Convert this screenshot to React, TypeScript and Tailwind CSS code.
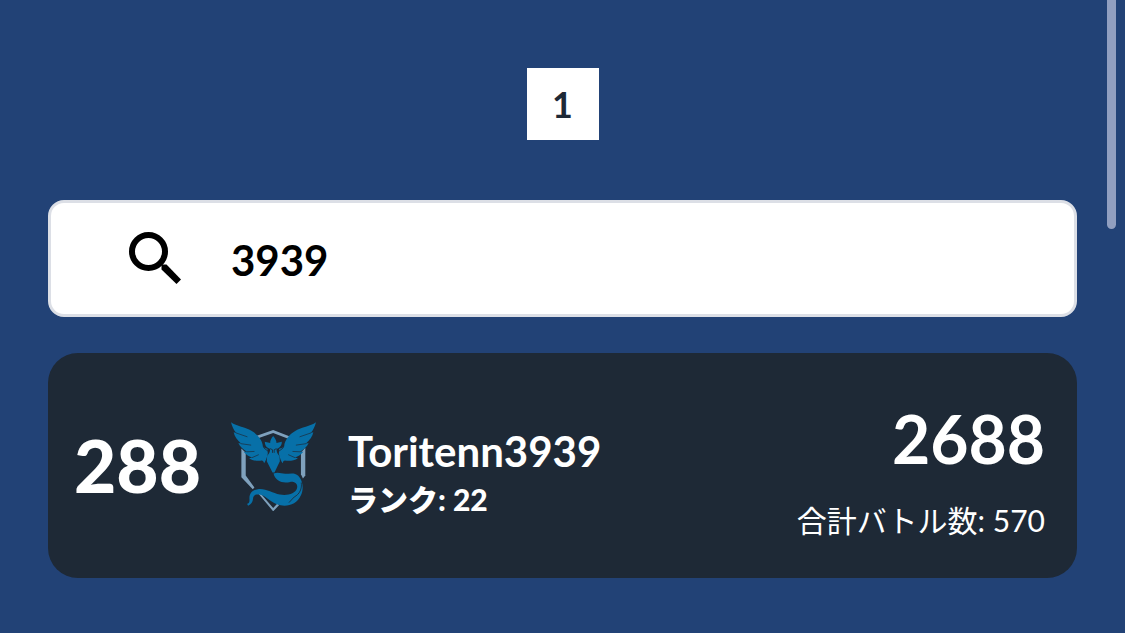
import { useState } from "react";

type Player = {
  position: number,
  name: string,
  rank: number,
  score: number,
  battles: number,
};

const players: Player[] = [
  { position: 288, name: "Toritenn3939", rank: 22, score: 2688, battles: 570 },
];

const SearchIcon = () => (
  <svg viewBox="0 0 52 52" className="mb-[2px] size-[52px] shrink-0" fill="none" stroke="black" strokeWidth="6" aria-hidden="true">
    <circle cx="19.5" cy="19.5" r="16.5" />
    <path d="M32.5 37.5V32.5H37.5L52 47.5L47.5 52Z" fill="black" strokeWidth="0" />
  </svg>
);

const TeamEmblem = () => (
  <svg viewBox="48 36 254 268" className="mt-[2px] w-[85px] shrink-0" role="img" aria-label="Team Mystic">
    {/* shield */}
    <g fill="#7fa1bd">
      <path d="M123 78L174 60L226 80L221 87L174 69L127 85Z" />
      <path d="M79 115L92 128V196L118 232L113 237L79 201Z" />
      <path d="M270 113L257 127V192L263 205L270 196Z" />
      <path d="M129 249L136 249L174 293L186 280L192 284L174 303Z" />
    </g>
    <g fill="#0770a8">
      {/* wings */}
      <path d="M48 37C65 49 92 52 109 62C128 73 141 90 143 106C145 112 150 114 157 116L158 131C155 144 151 154 147 159C145 153 143 151 140 151C127 154 113 151 102 144L112 142C103 140 92 134 86 125L96 125C85 119 75 110 70 99L79 101C67 91 58 79 56 67L64 69C56 60 51 50 48 37Z" />
      <path d="M302 37C285 49 258 52 241 62C222 73 209 90 207 106C205 112 200 114 192 116L191 131C194 144 198 154 202 159C204 153 206 151 209 151C223 154 237 151 248 144L238 142C247 140 258 134 264 125L254 125C265 119 275 110 280 99L271 101C283 91 292 79 294 67L286 69C294 60 299 50 302 37Z" />
      {/* head and body */}
      <path d="M174 78C180 85 184 91 184 99L200 95C200 105 196 111 188 115L184 117C184 126 187 132 193 138L194 153L178 187L172 187L155 153L156 137C162 132 165 126 165 117L159 114C152 110 149 104 149 95L165 99C165 91 168 85 174 78Z" />
      {/* tail */}
      <path d="M175 190C189 185 198 190 210 191C224 191 238 186 249 197C263 211 266 237 257 255C244 285 211 292 185 282C163 273 149 255 133 253C120 251 114 256 114 265C113 275 108 284 99 286L96 280C102 280 104 275 103 264C103 248 113 239 128 237C153 234 171 249 194 253C218 257 240 250 245 235C249 222 240 214 225 215C203 220 181 214 175 190Z" />
    </g>
    {/* feather and ribbon cuts */}
    <g fill="none" stroke="#1e2936" strokeLinecap="round">
      <path strokeWidth="2" d="M64 69L96 80M79 101L107 105M96 125L117 124M112 142L130 134" />
      <path strokeWidth="2" d="M286 69L254 80M271 101L243 105M254 125L233 124M238 142L220 134" />
      <path strokeWidth="2.5" d="M166 116L172 119V127M183 116L177 119V127" />
      <path strokeWidth="2.5" d="M144 108C145 116 153 118 160 124M206 108C205 116 197 118 190 124" />
      <path strokeWidth="2.5" d="M258 218C261 235 253 252 237 260L222 276" />
    </g>
  </svg>
);

const PlayerCard = ({ position, name, rank, score, battles }: Player) => (
  <li className="flex h-[225px] items-center rounded-[30px] bg-[#1e2936] pr-8 pl-[26px] text-white">
    <p className="w-[157px] text-[73px] leading-none font-black">{position}</p>
    <TeamEmblem />
    <div className="ml-8 pt-4">
      <h2 className="text-[42px] leading-[50px] font-bold">{name}</h2>
      <p className="text-[30px] leading-[46px] font-black">ランク: {rank}</p>
    </div>
    <div className="ml-auto pt-3 text-right">
      <p className="text-[66px] leading-[76px] font-bold">{score}</p>
      <p className="mt-5 text-[30px] leading-[46px]">合計バトル数: {battles}</p>
    </div>
  </li>
);

export default function App() {
  const [query, setQuery] = useState("3939");

  return (
    <main className="relative min-h-screen bg-[#224276] px-12 pt-[68px] pb-14 font-['Lato','Noto_Sans_CJK_JP',sans-serif]">
      <nav className="flex justify-center" aria-label="ページ">
        <button type="button" className="size-[72px] bg-white text-[36px] leading-none font-bold text-[#1e2936]">1</button>
      </nav>

      <label className="mt-[60px] flex h-[117px] items-center gap-[50px] rounded-2xl border-3 border-[#dcdfe6] bg-white px-[78px]">
        <SearchIcon />
        <input
          type="text"
          aria-label="検索"
          value={query}
          onChange={(e) => setQuery(e.target.value)}
          className="min-w-0 flex-1 bg-transparent pt-1 text-[42px] font-bold text-black outline-none"
        />
      </label>

      <ul className="mt-9">
        {players.map((player) => (
          <PlayerCard key={player.position} {...player} />
        ))}
      </ul>

      {/* scroll thumb */}
      <div className="absolute top-0 right-[9px] h-[229px] w-[9px] rounded-b-full bg-[#919fc0]" />
    </main>
  );
}
